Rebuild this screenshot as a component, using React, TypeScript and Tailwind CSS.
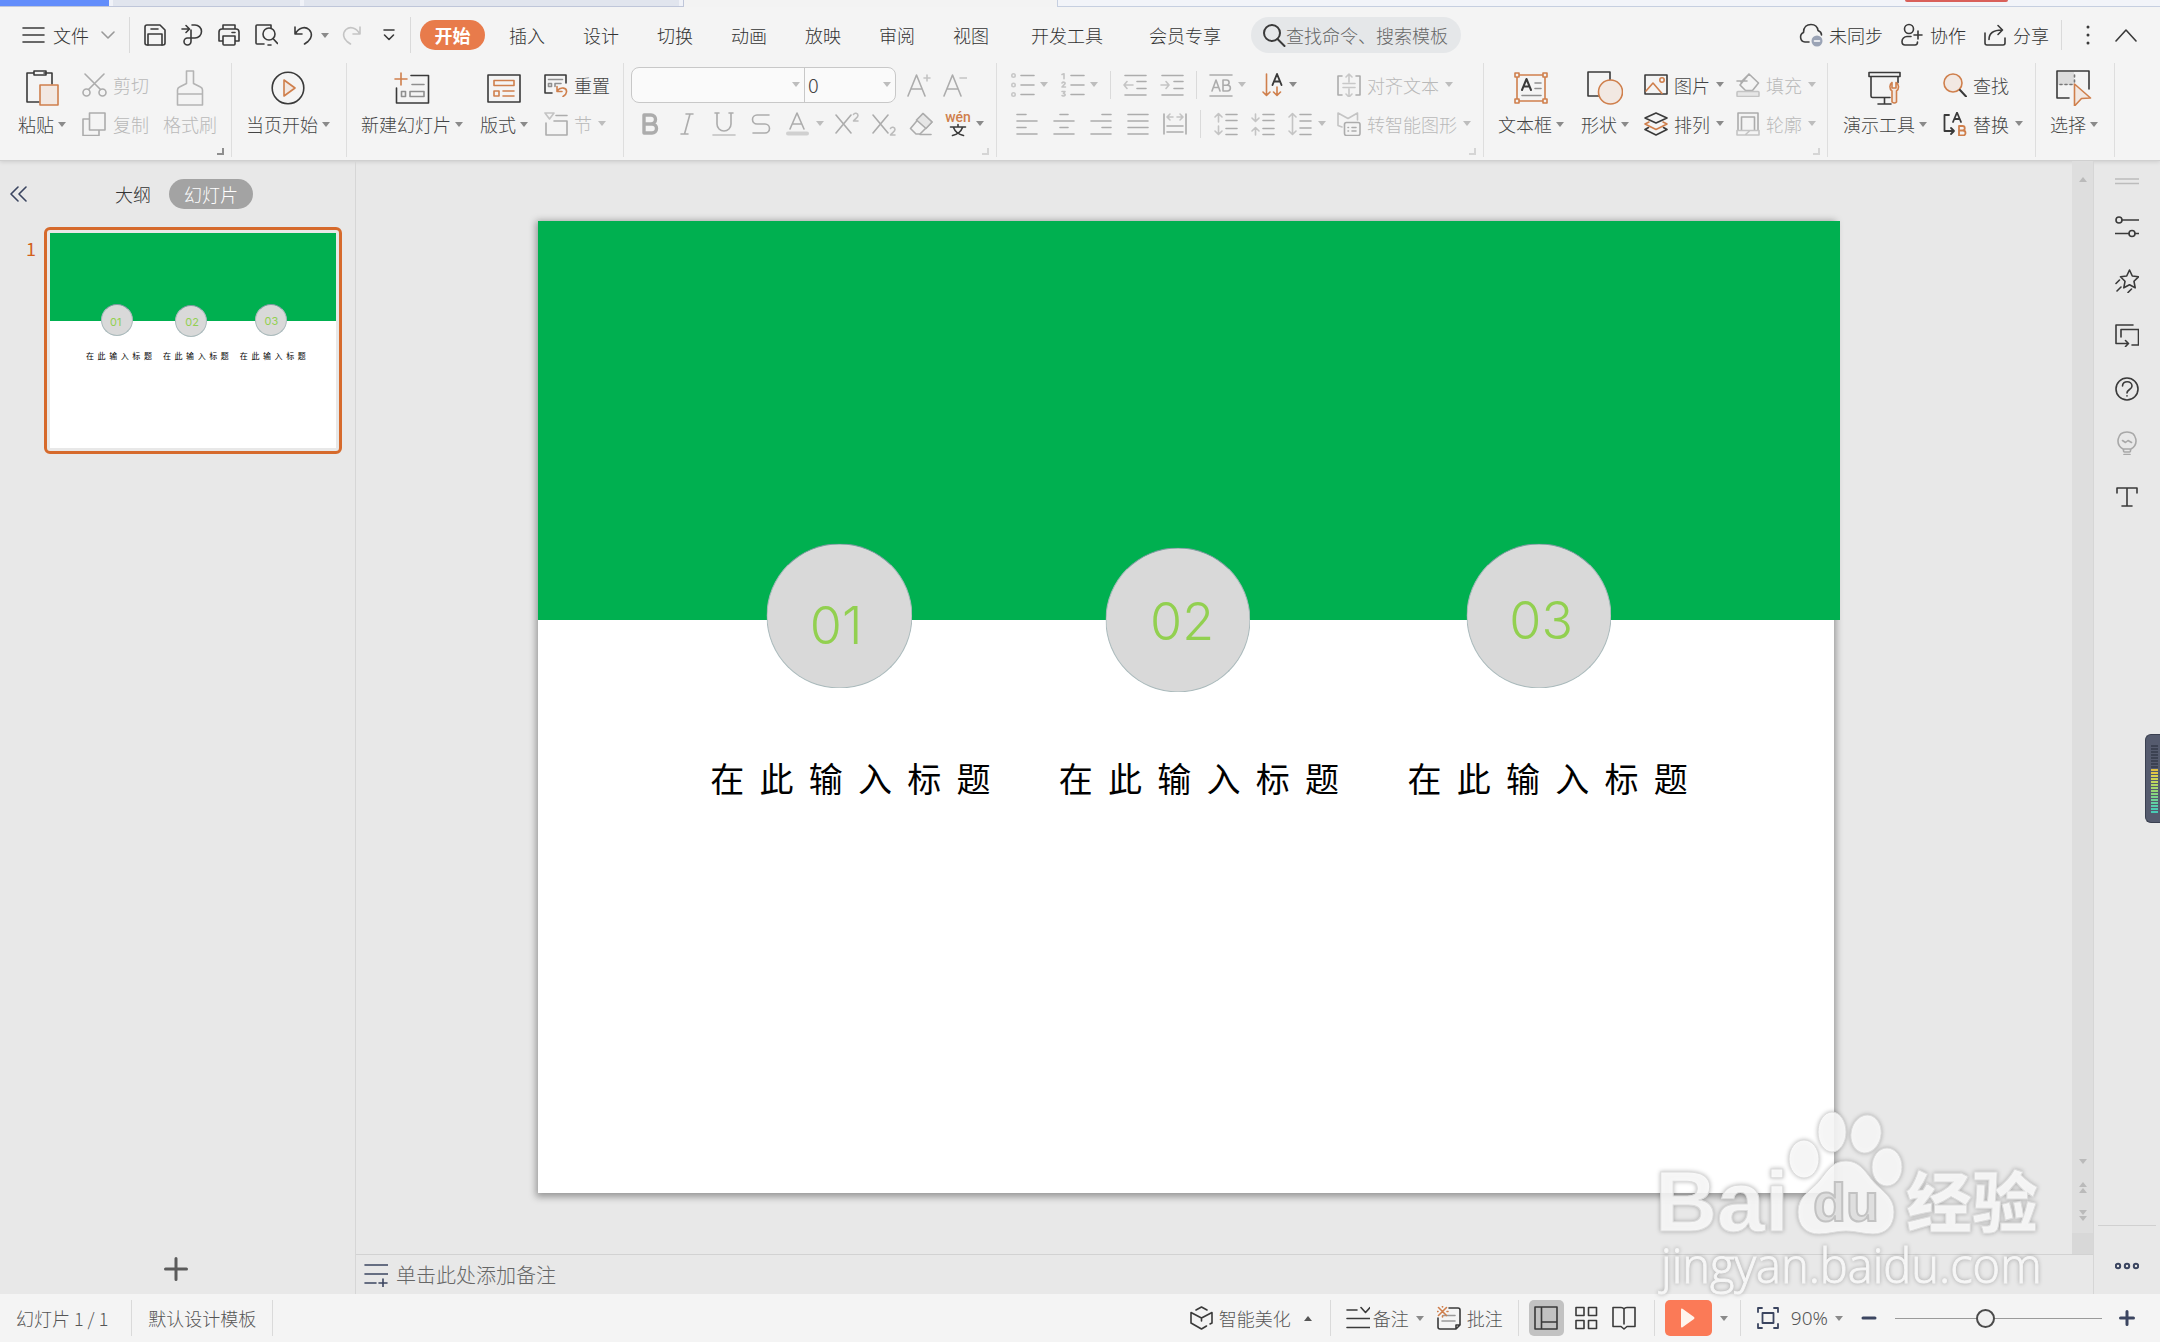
import type { ReactNode } from "react";
import clsx from "clsx";

const O = "#cf7f4c"; // accent stroke
const D = "#3a3a3a"; // dark stroke
const G = "#acacac"; // disabled stroke
const N = "#3b4560"; // navy stroke

type IcProps = { w?: number; h?: number; c?: string; sw?: number; children: ReactNode };

function Ic({ w = 24, h = 24, c = D, sw = 1.6, children }: IcProps) {
  return (
    <svg
      width={w}
      height={h}
      viewBox={`0 0 ${w} ${h}`}
      fill="none"
      stroke={c}
      strokeWidth={sw}
      strokeLinecap="round"
      strokeLinejoin="round"
      className="shrink-0"
      aria-hidden="true"
    >
      {children}
    </svg>
  );
}

function Caret({ c = "#8a8a8a", up = false }: { c?: string; up?: boolean }) {
  return (
    <svg width="8" height="5" viewBox="0 0 8 5" className="shrink-0" aria-hidden="true">
      <path d={up ? "M0 5h8L4 0z" : "M0 0h8L4 5z"} fill={c} />
    </svg>
  );
}

/* ---------- Ribbon building blocks ---------- */

type BtnProps = { icon: ReactNode; label: string; caret?: boolean; disabled?: boolean };

function BigButton({ icon, label, caret, disabled }: BtnProps) {
  return (
    <button disabled={disabled} className={clsx("mt-[5px] flex h-[72px] shrink-0 flex-col items-center", disabled ? "text-[#b9b9b9]" : "text-[#444]")}>
      <span className="flex h-9 items-center">{icon}</span>
      <span className="flex h-9 items-center gap-1 leading-none">
        {label}
        {caret && <Caret />}
      </span>
    </button>
  );
}

function SmallButton({ icon, label, caret, disabled }: BtnProps) {
  return (
    <button disabled={disabled} className={clsx("flex h-[39px] items-center gap-[6px] leading-none", disabled ? "text-[#b9b9b9]" : "text-[#444]")}>
      {icon}
      {label}
      {caret && <Caret c={disabled ? "#bdbdbd" : undefined} />}
    </button>
  );
}

function Cell({ label, children }: { label: string; children: ReactNode }) {
  return (
    <button aria-label={label} className="flex h-[39px] w-[37px] shrink-0 items-center justify-center">
      {children}
    </button>
  );
}

function DropCell({ label, dark, children }: { label: string; dark?: boolean; children: ReactNode }) {
  return (
    <button aria-label={label} className="flex h-[39px] shrink-0 items-center gap-[5px]">
      {children}
      <Caret c={dark ? "#8a8a8a" : "#bdbdbd"} />
    </button>
  );
}

function Group({ className, corner, cornerDark, children }: { className: string; corner?: boolean; cornerDark?: boolean; children: ReactNode }) {
  return (
    <div className={clsx("relative flex h-[94px] shrink-0 items-start border-r border-[#dedede] pt-[2px]", className)}>
      {children}
      {corner && (
        <span className={clsx("absolute right-[7px] bottom-[2px] h-[7px] w-[7px] border-r-2 border-b-2", cornerDark ? "border-[#8f8f8f]" : "border-[#d5d5d5]")} />
      )}
    </div>
  );
}

const Rule = ({ className }: { className: string }) => <span className={clsx("w-px shrink-0 bg-[#dadada]", className)} />;

/* ---------- Menu bar ---------- */

const TABS = ["插入", "设计", "切换", "动画", "放映", "审阅", "视图"];
const LONG_TABS = ["开发工具", "会员专享"];

function TopStrip() {
  return (
    <div className="flex h-[7px] bg-[#f3f3f3]">
      <div className="flex w-[684px] gap-1 border-r border-b border-[#bfc6d9] bg-[#f0f2f8]">
        <div className="w-[109px] bg-[#628dfb]" />
        <div className="w-[187px] bg-[#e1e5ee]" />
        <div className="w-[375px] bg-[#e1e5ee]" />
      </div>
      <div className="w-[373px]" />
      <div className="flex flex-1 justify-end border-b border-l border-[#c6cfe0] bg-[#f2f4f9] pr-[152px]">
        <div className="h-[2px] w-[103px] rounded-b bg-[#d9605a]" />
      </div>
    </div>
  );
}

function MenuBar() {
  return (
    <div className="flex h-14 items-center pr-[23px] pl-[22px] leading-none text-[#333]">
      <button className="flex items-center gap-2">
        <Ic w={23} h={18}>
          <path d="M1 2h21M1 9h21M1 16h21" />
        </Ic>
        文件
        <span className="ml-1">
          <Ic w={14} h={10} c="#999">
            <path d="M1 2l6 6 6-6" />
          </Ic>
        </span>
      </button>
      <Rule className="mr-[6px] ml-[14px] h-9" />
      <Cell label="保存">
        <Ic>
          <path d="M4 2h13l5 5v13a2 2 0 0 1-2 2H4a2 2 0 0 1-2-2V4a2 2 0 0 1 2-2z" />
          <path d="M5 22V11h14v11M8 6h7" />
        </Ic>
      </Cell>
      <Cell label="输出为PDF">
        <Ic>
          <path d="M2 6h7M6 2.500l3.500 3.500L6 9.500M12 2h3a6.500 6.500 0 0 1 0 13H7.500a3.500 3.500 0 1 0 3.500 3.500V7" />
        </Ic>
      </Cell>
      <Cell label="打印">
        <Ic>
          <path d="M6 6V2h12v4M5 18H2V9a3 3 0 0 1 3-3h14a3 3 0 0 1 3 3v9h-3M6 13h12v8a1 1 0 0 1-1 1H7a1 1 0 0 1-1-1zM15 9.500h3" />
        </Ic>
      </Cell>
      <Cell label="打印预览">
        <Ic>
          <path d="M10 21H3a1 1 0 0 1-1-1V3a1 1 0 0 1 1-1h14v3" />
          <circle cx="15" cy="11" r="6" />
          <path d="M14 22h3M19 15.500l4.500 5" />
        </Ic>
      </Cell>
      <Cell label="撤销">
        <Ic w={20} h={22}>
          <path d="M2 3v7h7M2.500 9.500C6 3.500 12 2 16 5.500c4 4 2.500 9-1 12L11.500 20" />
        </Ic>
      </Cell>
      <button aria-label="撤销列表">
        <Caret />
      </button>
      <span className="ml-1 flex">
        <Cell label="恢复">
          <Ic w={20} h={22} c="#c4c4c4">
            <path d="M18 3v7h-7M17.500 9.500C14 3.500 8 2 4 5.500c-4 4-2.500 9 1 12L8.500 20" />
          </Ic>
        </Cell>
        <Cell label="自定义快速访问">
          <Ic w={12} h={14}>
            <path d="M1 2h10M1.500 7L6 11.500 10.500 7" />
          </Ic>
        </Cell>
      </span>
      <Rule className="mr-[9px] ml-[3px] h-9" />
      <button className="h-[30px] w-[65px] shrink-0 rounded-full bg-[#e87b4b] font-bold text-white">开始</button>
      <nav className="ml-[5px] flex shrink-0">
        {TABS.map((t) => (
          <button key={t} className="px-[19px]">
            {t}
          </button>
        ))}
        {LONG_TABS.map((t) => (
          <button key={t} className="px-[23px]">
            {t}
          </button>
        ))}
      </nav>
      <label className="ml-[7px] flex h-9 w-[210px] shrink-0 items-center rounded-full bg-[#e5e7e9] pl-[11px]">
        <Ic sw={2}>
          <circle cx="10" cy="10" r="8" />
          <path d="M15.500 16l7 7" />
        </Ic>
        <input aria-label="查找命令" placeholder="查找命令、搜索模板" className="w-[168px] bg-transparent outline-none placeholder:text-[#666]" />
      </label>
      <div className="ml-auto flex shrink-0 items-center gap-[17px]">
        <button className="flex items-center gap-[6px]">
          <Ic>
            <path d="M10 19H6a5 5 0 0 1-1.500-9.500C4.500 4 8 1.500 12 1.500c4 0 6.500 2.500 7 6 2.500 1 3.500 2.500 3.500 4.500" />
            <circle cx="18" cy="18" r="5.500" fill="#9aa3b5" stroke="none" />
            <path d="M15.500 18h5" stroke="#fff" />
          </Ic>
          未同步
        </button>
        <button className="flex items-center gap-[6px]">
          <Ic>
            <circle cx="9" cy="6" r="4.500" />
            <path d="M11 13.500H7a5 5 0 0 0-5 5c0 2 1 3.500 3 3.500h10c1.500 0 2.500-1 2.500-3M14 12h8M18 8v8" />
          </Ic>
          协作
        </button>
        <button className="flex items-center gap-[6px]">
          <Ic>
            <path d="M2 10v10a2 2 0 0 0 2 2h16a2 2 0 0 0 2-2v-5" />
            <path d="M6 16.500c0-6 4-9.500 13-9.500M15 2.500L19.500 7 15 11.500" />
          </Ic>
          分享
        </button>
      </div>
      <Rule className="mr-[24px] ml-[12px] h-[30px]" />
      <button aria-label="更多">
        <Ic w={4} h={20}>
          <path d="M2 2v.1M2 10v.1M2 18v.1" strokeWidth="3" />
        </Ic>
      </button>
      <button aria-label="折叠功能区" className="ml-[25px]">
        <Ic w={22} h={14}>
          <path d="M1 13L11 2l10 11" />
        </Ic>
      </button>
    </div>
  );
}

/* ---------- Ribbon ---------- */

function FontGroup() {
  return (
    <Group className="pr-[12px] pl-[7px]" corner>
      <div>
        <div className="flex h-[39px] items-center">
          <div className="flex h-9 w-[265px] rounded-lg border border-[#c8c8c8] bg-[#fafafa]">
            <label className="flex w-[173px] items-center border-r border-[#c8c8c8] pr-[4px]">
              <input aria-label="字体" className="w-full min-w-0 bg-transparent px-2 outline-none" />
              <Caret c="#bdbdbd" />
            </label>
            <label className="flex flex-1 items-center pr-[4px]">
              <input aria-label="字号" defaultValue="0" className="w-full min-w-0 bg-transparent pl-[3px] text-[20px] text-[#444] outline-none" />
              <Caret c="#bdbdbd" />
            </label>
          </div>
          <button aria-label="增大字号" className="ml-[11px]">
            <Ic c={G}>
              <path d="M1 23L9.500 2 18 23M4.500 16h10" />
              <path d="M17 5h6M20 2v6" stroke="#c4c4c4" />
            </Ic>
          </button>
          <button aria-label="减小字号" className="ml-[12px]">
            <Ic c={G}>
              <path d="M1 23L9.500 2 18 23M4.500 16h10" />
              <path d="M17 5h7" stroke="#c4c4c4" />
            </Ic>
          </button>
        </div>
        <div className="flex items-center">
          <Cell label="加粗">
            <Ic w={20} c={G} sw={3.400}>
              <path d="M4 3h7a4.500 4.500 0 0 1 0 9H4zM4 12h8a4.500 4.500 0 0 1 0 9H4z" />
            </Ic>
          </Cell>
          <Cell label="倾斜">
            <Ic w={16} c={G}>
              <path d="M7 2h7M2 22h7M11 2L5.500 22" />
            </Ic>
          </Cell>
          <Cell label="下划线">
            <Ic c={G}>
              <path d="M3 1h4M17 1h4M5 1v11a7 7 0 0 0 14 0V1" />
              <path d="M1 23h22" stroke="#c0c0c0" />
            </Ic>
          </Cell>
          <Cell label="删除线">
            <Ic w={20} c={G}>
              <path d="M18 3H6a4.500 4.500 0 0 0 0 9h8a4.500 4.500 0 0 1 0 9H2" />
            </Ic>
          </Cell>
          <Cell label="字体颜色">
            <Ic c={G}>
              <path d="M4 17l7-16 7 16M6.500 12h9" />
              <path d="M2 21.500h19" stroke="#d0d0d0" strokeWidth="4" />
            </Ic>
          </Cell>
          <span className="flex w-[12px]">
            <Caret c="#bdbdbd" />
          </span>
          <Cell label="上标">
            <Ic c={G}>
              <path d="M1 3l15 18M16 3L1 21" />
              <path d="M18.500 2.500c1-2 4.500-1.500 4.500 1 0 2-2.500 3-4.500 5.500H23" stroke="#bcbcbc" />
            </Ic>
          </Cell>
          <Cell label="下标">
            <Ic c={G}>
              <path d="M1 3l15 18M16 3L1 21" />
              <path d="M18.500 16.500c1-2 4.500-1.500 4.500 1 0 2-2.500 3-4.500 5.500H23" stroke="#bcbcbc" />
            </Ic>
          </Cell>
          <Cell label="清除格式">
            <Ic c={G}>
              <path d="M14 1.500l9 8.500-12 12H7l-5.500-5.500z" />
              <path d="M14 1.500l9 8.500-6 6.500-9.500-8.500z" fill="#e6e6e6" />
              <path d="M11 22.500h11" />
            </Ic>
          </Cell>
          <Cell label="拼音指南">
            <Ic w={30} h={32}>
              <text x="15" y="14" textAnchor="middle" fontSize="14" fontFamily="Roboto, sans-serif" fontWeight="500" fill={O} stroke="none">
                wén
              </text>
              <path d="M7.500 19h15M15 16.500V19M10.500 19.500c1.500 4 5 7 10 8M19.500 19.500c-1.500 4-5 7-10 8" />
            </Ic>
          </Cell>
          <Caret />
        </div>
      </div>
    </Group>
  );
}

function ParagraphGroup() {
  return (
    <Group className="pr-[12px] pl-[11px]" corner>
      <div className="w-[329px]">
        <div className="flex items-center pl-[3px]">
          <DropCell label="项目符号">
            <Ic c={G}>
              <path d="M10 2.500h13M10 12h13M10 21.500h13" />
              <g stroke="#c8c8c8">
                <circle cx="2.500" cy="2.500" r="1.700" />
                <circle cx="2.500" cy="12" r="1.700" />
                <circle cx="2.500" cy="21.500" r="1.700" />
              </g>
            </Ic>
          </DropCell>
          <span className="ml-[13px]">
            <DropCell label="编号">
              <Ic c={G}>
                <path d="M10 2.500h13M10 12h13M10 21.500h13" />
                <path d="M1 1.500L3 .8v5M1 10c1-1.500 3.500-1 3 .8L1 14h3.500M1 18.500h3l-1.500 2c3 .5 1.500 3.500-1.500 2" stroke="#c4c4c4" />
              </Ic>
            </DropCell>
          </span>
          <Rule className="mx-[12px] h-7" />
          <button aria-label="减少缩进量">
            <Ic c={G}>
              <path d="M2 2.500h21M14 8.500h9M14 15.500h9M2 22h21" />
              <path d="M10 12H1M4 8.500L1 12l3 3.500" stroke="#c4c4c4" />
            </Ic>
          </button>
          <button aria-label="增加缩进量" className="ml-[13px]">
            <Ic c={G}>
              <path d="M2 2.500h21M14 8.500h9M14 15.500h9M2 22h21" />
              <path d="M1 12h8M6 8.500L9 12l-3 3.500" stroke="#c4c4c4" />
            </Ic>
          </button>
          <Rule className="mx-[12px] h-7" />
          <DropCell label="字符间距">
            <Ic c={G}>
              <path d="M1 2h22M1 23h22" />
              <path d="M3 18l4-11 4 11M4.500 14.500h5M14 7h3.500a2.600 2.600 0 0 1 0 5.200H14zM14 12.200h4.500a2.900 2.900 0 0 1 0 5.800H14z" />
            </Ic>
          </DropCell>
          <span className="ml-[16px]">
            <DropCell label="文字方向" dark>
              <Ic w={22} c={O}>
                <path d="M4.500 1v21M1 19l3.500 3.500L8 19M15 14v8M11.500 19l3.500 3.500 3.500-3.500" />
                <path d="M10.500 12L15 1l4.500 11M12 8.500h6" stroke={D} strokeWidth="1.900" />
              </Ic>
            </DropCell>
          </span>
        </div>
        <div className="flex items-center">
          <Cell label="左对齐">
            <Ic w={22} c={G}>
              <path d="M1 2.500h9M1 9h20M1 15.500h9M1 22h20" />
            </Ic>
          </Cell>
          <Cell label="居中">
            <Ic w={22} c={G}>
              <path d="M7 2.500h8M1 9h20M7 15.500h8M1 22h20" />
            </Ic>
          </Cell>
          <Cell label="右对齐">
            <Ic w={22} c={G}>
              <path d="M12 2.500h9M1 9h20M12 15.500h9M1 22h20" />
            </Ic>
          </Cell>
          <Cell label="两端对齐">
            <Ic w={22} c={G}>
              <path d="M1 2.500h20M1 9h20M1 15.500h20M1 22h20" />
            </Ic>
          </Cell>
          <Cell label="分散对齐">
            <Ic c={G}>
              <path d="M1 2v20M23 2v20M4 14h16M4 20h16" />
              <path d="M10 5H4.500M7 2L4 5l3 3M14 5h5.500M17 2l3 3-3 3" stroke="#c4c4c4" />
            </Ic>
          </Cell>
          <Rule className="mr-[6px] ml-[7px] h-7" />
          <Cell label="增大段落间距">
            <Ic c={G}>
              <path d="M12 2.500h11M12 8.500h11M12 16.500h11M12 22.500h11" />
              <path d="M4.500 10V2M1 5l3.500-3.500L8 5M4.500 14v8M1 19l3.500 3.500L8 19" stroke="#c4c4c4" />
            </Ic>
          </Cell>
          <Cell label="减小段落间距">
            <Ic c={G}>
              <path d="M12 2.500h11M12 8.500h11M12 16.500h11M12 22.500h11" />
              <path d="M4.500 2v7M1 6l3.500 3.500L8 6M4.500 23v-7M1 19l3.500-3.500L8 19" stroke="#c4c4c4" />
            </Ic>
          </Cell>
          <Cell label="行距">
            <Ic c={G}>
              <path d="M12 2.500h11M12 9h11M12 16h11M12 22.500h11" />
              <path d="M4.500 2v20M1 5l3.500-3.500L8 5M1 19l3.500 3.500L8 19" stroke="#c4c4c4" />
            </Ic>
          </Cell>
          <Caret c="#bdbdbd" />
        </div>
      </div>
      <div>
        <SmallButton
          label="对齐文本"
          caret
          disabled
          icon={
            <Ic c={G}>
              <path d="M5 3H1v19h4M19 3h4v19h-4" />
              <path d="M12 9V1M9 4l3-3 3 3M12 16v8M9 21l3 3 3-3M6 10.500h12M6 14.500h12" stroke="#c8c8c8" />
            </Ic>
          }
        />
        <SmallButton
          label="转智能图形"
          caret
          disabled
          icon={
            <Ic c={G}>
              <path d="M5 15l-4-1.500V1l10 5.500L20.500 1v7" stroke="#c4c4c4" />
              <rect x="7.500" y="10.500" width="15.500" height="13" rx="2" />
              <path d="M11 15.500h.5M15 15.500h4M11 19h.5M15 19h4" />
            </Ic>
          }
        />
      </div>
    </Group>
  );
}

function Ribbon() {
  return (
    <div className="flex h-[97px] items-start text-[#444]">
      <Group className="pr-[14px] pl-[18px]" corner cornerDark>
        <BigButton
          label="粘贴"
          caret
          icon={
            <Ic w={34} h={36}>
              <path d="M8 3H2v29h12M19 3h8v11M9 1h12v4H9z" />
              <path d="M15 15h18v20H15z" fill="#f2e8e2" stroke={O} />
            </Ic>
          }
        />
        <div className="mr-[14px] ml-[16px]">
          <SmallButton
            label="剪切"
            disabled
            icon={
              <Ic w={25} c={G}>
                <circle cx="4.500" cy="19.500" r="3.500" />
                <circle cx="20.500" cy="19.500" r="3.500" />
                <path d="M3 1l15.500 15.500M22 1L6.500 16.500" />
              </Ic>
            }
          />
          <SmallButton
            label="复制"
            disabled
            icon={
              <Ic w={25} c={G}>
                <path d="M7.500 1H23v17H7.500zM7.500 7H1v16.500h16V18" />
              </Ic>
            }
          />
        </div>
        <BigButton
          label="格式刷"
          disabled
          icon={
            <Ic w={28} h={36} c="#b4b4b4">
              <path d="M10.500 1h7v12.500l7 3.500c1.500.700 2 1.500 2 3v15H1.500V20c0-1.500.500-2.300 2-3l7-3.500zM1.500 24h25" />
            </Ic>
          }
        />
      </Group>
      <Group className="pr-[16px] pl-[14px]">
        <BigButton
          label="当页开始"
          caret
          icon={
            <Ic w={34} h={34}>
              <circle cx="17" cy="17" r="15.800" />
              <path d="M13 9l11 8-11 8z" fill="#f2e8e2" stroke={O} />
            </Ic>
          }
        />
      </Group>
      <Group className="pr-[13px] pl-[14px]">
        <BigButton
          label="新建幻灯片"
          caret
          icon={
            <Ic w={36} h={32}>
              <path d="M17 3.500h17.500V31H2.500V16" />
              <path d="M7 1v12M1 7h12" stroke={O} />
              <path d="M18 12.500h12M7.500 19.500h4v5h-4zM16 19.500h14v5H16z" stroke="#8f8f8f" />
            </Ic>
          }
        />
        <span className="w-[17px]" />
        <BigButton
          label="版式"
          caret
          icon={
            <Ic w={34} h={30}>
              <path d="M1 2h32v27H1z" />
              <path d="M7 7.500h20v5H7zM7 18h5v5H7zM16 18h11M16 23h11" stroke={O} />
            </Ic>
          }
        />
        <div className="ml-[16px]">
          <SmallButton
            label="重置"
            icon={
              <Ic>
                <path d="M8 20H1V2h21v8" />
                <path d="M4.500 6.500h14M4.500 10.500h3v3h-3zM11 10.500h6M11 10.500v3" stroke="#8f8f8f" />
                <path d="M13 13.500v5h5M13 18c4-5 10-3 9.500 1-.200 2-1.500 3.500-3.500 4.500" stroke={O} />
              </Ic>
            }
          />
          <SmallButton
            label="节"
            caret
            disabled
            icon={
              <Ic c={G}>
                <path d="M1 1h9L5.500 7z" stroke="#c4c4c4" />
                <path d="M12 3.500h11M10 9h13v14H2V11" />
              </Ic>
            }
          />
        </div>
      </Group>
      <FontGroup />
      <ParagraphGroup />
      <Group className="pr-[11px] pl-[14px]" corner>
        <BigButton
          label="文本框"
          caret
          icon={
            <Ic w={34} h={32} c={O}>
              <path d="M3 3h28v26H3z" />
              <g fill="#f3f3f3">
                <rect x="1" y="1" width="4" height="4" />
                <rect x="29" y="1" width="4" height="4" />
                <rect x="1" y="27" width="4" height="4" />
                <rect x="29" y="27" width="4" height="4" />
              </g>
              <path d="M8 18l4.500-11L17 18M9.500 14.500h6" stroke={D} strokeWidth="2" />
              <path d="M21 11h6M21 16.500h6M8 23.500h19" stroke="#8f8f8f" />
            </Ic>
          }
        />
        <span className="w-[17px]" />
        <BigButton
          label="形状"
          caret
          icon={
            <Ic w={36} h={34}>
              <path d="M1 1h22v24H1z" />
              <circle cx="23.500" cy="21" r="12" fill="#f2e8e2" stroke={O} />
            </Ic>
          }
        />
        <div className="ml-[15px]">
          <SmallButton
            label="图片"
            caret
            icon={
              <Ic>
                <path d="M1 2h22v19H1z" />
                <path d="M2 18l7-8 9 10.500" stroke={O} />
                <circle cx="18" cy="7" r="2.200" stroke={O} />
              </Ic>
            }
          />
          <SmallButton
            label="排列"
            caret
            icon={
              <Ic>
                <path d="M12 1l11 5-11 5L1 6zM1 17.500l3.500-2M23 17.500l-3.500-2M1 17.500l11 5.500 11-5.500" />
                <path d="M5 10l-4 2 11 5.500L23 12l-4-2" stroke={O} />
              </Ic>
            }
          />
        </div>
        <div className="ml-[12px]">
          <SmallButton
            label="填充"
            caret
            disabled
            icon={
              <Ic c={G}>
                <path d="M13 1l9.500 9-6 7.500h-7L4 12zM1 8h10M13 1L5 9" />
                <rect x="1" y="18.500" width="22" height="5" rx="1" fill="#e6e6e6" stroke="#c4c4c4" />
              </Ic>
            }
          />
          <SmallButton
            label="轮廓"
            caret
            disabled
            icon={
              <Ic c={G}>
                <path d="M2 18V1h20v17M5.500 18V5h13v13" />
                <path d="M1 18.500h22v4.500H1zM9 23l5-4.500" stroke="#c4c4c4" />
              </Ic>
            }
          />
        </div>
      </Group>
      <Group className="pr-[12px] pl-[15px]">
        <BigButton
          label="演示工具"
          caret
          icon={
            <Ic w={34} h={34}>
              <path d="M1 1.500h31v4H1zM3 5.500V25q0 1.500 1.500 1.500H22M30 5.500v6M16.500 27v6M10 33h13" />
              <path d="M24 31V20c-3-2-2.500-7 0-8.500V17h4v-5.500c3 1.500 3.500 6.500.500 8.500v11q-2 2-4.500 0z" fill="#f2e8e2" stroke={O} />
            </Ic>
          }
        />
        <div className="ml-[16px]">
          <SmallButton
            label="查找"
            icon={
              <Ic>
                <circle cx="10" cy="10" r="9" fill="#f2e8e2" stroke={O} />
                <path d="M17 17l6 6.500" strokeWidth="2" />
              </Ic>
            }
          />
          <SmallButton
            label="替换"
            caret
            icon={
              <Ic sw={1.800}>
                <path d="M6 3H1.500v16H11M8 16l3 3-3 3" />
                <path d="M10 10l4-9.500 4 9.500M11.500 7h5" />
                <path d="M16 14h3.500a2.200 2.200 0 0 1 0 4.500H16zM16 18.500h4a2.400 2.400 0 0 1 0 5H16z" stroke={O} />
              </Ic>
            }
          />
        </div>
      </Group>
      <Group className="pr-[16px] pl-[14px]">
        <BigButton
          label="选择"
          caret
          icon={
            <Ic w={36} h={36}>
              <path d="M2 2h16v13H2z" fill="#dcdcdc" stroke="none" />
              <path d="M13 28H1V1h32v18" />
              <path d="M18.500 5v8M4 14.500h13" stroke="#777" strokeDasharray="2 3" />
              <path d="M18.500 14l16 14-9 .5-7 7.500z" fill="#f2e8e2" stroke={O} />
            </Ic>
          }
        />
      </Group>
    </div>
  );
}

/* ---------- Slide ---------- */

// Positions are fractions of the slide, measured to each item's centre.
const BADGES = [
  { x: 0.2326, y: 0.406 },
  { x: 0.494, y: 0.41 },
  { x: 0.772, y: 0.406 },
];
const NUMBERS = [
  { no: "01", x: 0.23, y: 0.417 },
  { no: "02", x: 0.497, y: 0.413 },
  { no: "03", x: 0.774, y: 0.412 },
];
const TITLES = [0.241, 0.51, 0.779];

const pct = (n: number) => `${n * 100}%`;

function Slide({ thumb }: { thumb?: boolean }) {
  return (
    <div className={clsx("relative aspect-[4/3] w-full bg-white", !thumb && "shadow-[0_2px_7px_2px_rgba(0,0,0,0.35)]")}>
      <div className={clsx("absolute top-0 left-0 h-[41%] bg-[#00b050]", thumb ? "right-0" : "-right-[6px]")} />
      {BADGES.map((b) => (
        <div
          key={b.x}
          style={{ left: pct(b.x), top: pct(b.y) }}
          className="absolute aspect-square w-[11.2%] -translate-x-1/2 -translate-y-1/2 rounded-full border border-[#a9b9bb] border-t-[#7e9aa0] bg-[#d9d9d9]"
        />
      ))}
      {NUMBERS.map((n) => (
        <p
          key={n.no}
          style={{ left: pct(n.x), top: pct(n.y) }}
          className={clsx(
            "absolute -translate-x-1/2 -translate-y-1/2 font-['Inter',sans-serif] leading-none text-[#92d050]",
            thumb ? "text-[11px] font-normal" : "text-[52px] font-light"
          )}
        >
          {n.no}
        </p>
      ))}
      {TITLES.map((x) => (
        <p
          key={x}
          style={{ left: pct(x) }}
          className={clsx(
            "absolute top-[57.3%] -translate-x-1/2 -translate-y-1/2 font-['Noto_Sans_CJK_SC'] leading-none font-normal whitespace-pre text-black",
            thumb ? "text-[8px]" : "text-[34px]"
          )}
        >
          {"在  此  输  入  标  题"}
        </p>
      ))}
    </div>
  );
}

/* ---------- Panels ---------- */

function SlidePanel() {
  return (
    <aside className="flex w-[356px] shrink-0 flex-col border-r border-[#d6d6d6] leading-none">
      <div className="flex h-[66px] items-center pl-[10px] text-[#333]">
        <button aria-label="收起">
          <Ic w={17} h={16} c={N}>
            <path d="M8 1L1 8l7 7M16 1L9 8l7 7" />
          </Ic>
        </button>
        <button className="ml-[88px]">大纲</button>
        <button className="ml-[18px] h-[30px] w-[84px] rounded-full bg-[#a3a3a3] text-white">幻灯片</button>
      </div>
      <div className="flex pr-[13px]">
        <span className="w-[44px] shrink-0 pt-[12px] pl-[26px] font-['Noto_Sans_CJK_SC'] font-normal text-[#d2601a]">1</span>
        <div className="flex-1 rounded-md border-[3px] border-[#d66a2c] p-[3px]">
          <Slide thumb />
        </div>
      </div>
      <button aria-label="新建幻灯片" className="mt-auto mb-[13px] ml-[164px] w-6">
        <Ic c="#5b5b5b" sw={3}>
          <path d="M12 1.500v21M1.500 12h21" />
        </Ic>
      </button>
    </aside>
  );
}

function ScrollBar() {
  return (
    <div className="flex w-[21px] shrink-0 flex-col items-center bg-[#dedede] pt-[16px]">
      <Caret up c="#bababa" />
      <div className="mt-auto flex flex-col items-center pb-[12px]">
        <Caret c="#bababa" />
        <span className="mt-[18px] flex flex-col gap-px">
          <Caret up c="#bababa" />
          <Caret up c="#bababa" />
        </span>
        <span className="mt-[17px] flex flex-col gap-px">
          <Caret c="#bababa" />
          <Caret c="#bababa" />
        </span>
      </div>
      <div className="h-[21px] w-full bg-[#d8d8d8]" />
    </div>
  );
}

function SideTool({ label, children }: { label: string; children: ReactNode }) {
  return (
    <button aria-label={label} className="flex h-[54px] items-center justify-center">
      {children}
    </button>
  );
}

function SideBar() {
  return (
    <aside className="flex w-[67px] shrink-0 flex-col border-l border-[#d6d6d6]">
      <div className="flex h-[39px] items-center justify-center">
        <Ic h={8} c="#bcbcbc">
          <path d="M0 2h24M0 6.500h24" />
        </Ic>
      </div>
      <SideTool label="属性">
        <Ic>
          <circle cx="4" cy="5" r="3" />
          <circle cx="17" cy="18.500" r="3" />
          <path d="M7 5h17M0 18.500h14M20 18.500h4" />
        </Ic>
      </SideTool>
      <SideTool label="动画">
        <Ic>
          <path d="M14.500 1l2.800 6 6.200.8-4.500 4.500 1.200 6.500-5.700-3-5.700 3 1.200-6.500L5.500 7.800l6.200-.8zM1 14.500l3.500-3.500M2 22l4-4M13 23.500l3.500-3.500" />
        </Ic>
      </SideTool>
      <SideTool label="切换">
        <Ic>
          <path d="M18 2H1v18.500h12M10.500 17.500l3 3-3 3M6 14V6.500h17.500V22H17" />
        </Ic>
      </SideTool>
      <SideTool label="帮助">
        <Ic>
          <circle cx="12" cy="12" r="11" />
          <path d="M7.500 9c0-6 9.500-5.500 9.500 0 0 3.500-5 3.500-5 7M12 18.800v.2" />
        </Ic>
      </SideTool>
      <SideTool label="灵感">
        <Ic c="#a8a8a8">
          <path d="M8 18C0 13.500 2 1 12 1s12 12.500 4 17zM8.500 18v2q0 1 1 1h5q1 0 1-1v-2M9 23.500h6M7.500 9.500l3 2 2.500-2 3.500 2" />
        </Ic>
      </SideTool>
      <SideTool label="文字">
        <Ic>
          <path d="M2 8V3h20v5M12 3v18M7 21h10" />
        </Ic>
      </SideTool>
      <div className="mx-1 mt-auto border-t border-[#d0d0d0]" />
      <button aria-label="更多" className="flex h-[68px] items-center justify-center pt-[12px]">
        <Ic h={8} c={N} sw={2}>
          <circle cx="3" cy="4" r="2.200" />
          <circle cx="12" cy="4" r="2.200" />
          <circle cx="21" cy="4" r="2.200" />
        </Ic>
      </button>
    </aside>
  );
}

const METER = [
  "#3c4252", "#3c4252", "#3c4252", "#3c4252", "#3c4252", "#3c4252", "#3c4252", "#3c4252",
  "#e0bf42", "#e3c644", "#dcd04e", "#d0d354", "#c0d65c", "#b0d764", "#a3d76c", "#96d774",
  "#88d77e", "#7ad58a", "#6ed397", "#62d1a2", "#56cfac", "#4eccb2", "#48cab4",
];

function Meter() {
  return (
    <div className="absolute top-[734px] right-0 flex h-[89px] w-[15px] flex-col justify-center gap-px rounded-l-md border border-r-0 border-[#3a4050] bg-[#555b6e] pl-[5px]">
      {METER.map((c, i) => (
        <span key={i} style={{ backgroundColor: c }} className="h-[2px] w-[7px]" />
      ))}
    </div>
  );
}

function Watermark() {
  return (
    <svg
      width="400"
      height="200"
      viewBox="0 0 400 200"
      className="pointer-events-none absolute right-[110px] bottom-[42px] drop-shadow-[0_0_2px_rgba(0,0,0,0.3)]"
      fill="#fff"
      fillOpacity="0.85"
      stroke="#dcdcdc"
      strokeWidth="1"
    >
      <text x="5" y="131" fontSize="86" fontWeight="700" fontFamily="Liberation Sans, sans-serif">Bai</text>
      <ellipse cx="154" cy="59" rx="15" ry="19" />
      <ellipse cx="182" cy="32" rx="14" ry="20" />
      <ellipse cx="216" cy="34" rx="15" ry="19" transform="rotate(10 216 34)" />
      <ellipse cx="237" cy="67" rx="15" ry="19" />
      <path d="M196 61c13 0 19 10 26 19 9 11 22 16 22 32 0 14-8 22-21 22-10 0-17-3-27-3s-17 3-27 3c-13 0-21-8-21-22 0-16 13-21 22-32 7-9 13-19 26-19z" />
      <text x="163" y="121" fontSize="54" fontWeight="700" fontFamily="Liberation Sans, sans-serif" fill="#dadada" stroke="#c2c2c2" strokeWidth="2">du</text>
      <text x="256" y="127" fontSize="66" fontWeight="900" fontFamily="Noto Sans CJK SC, sans-serif">经验</text>
      <text x="11" y="183" fontSize="47" fontFamily="Open Sans, sans-serif" stroke="#f4f4f4">jingyan.baidu.com</text>
    </svg>
  );
}

/* ---------- Status bar ---------- */

function StatusBar() {
  return (
    <footer className="flex h-12 items-center bg-[#f4f4f4] pr-[25px] pl-4 leading-none text-[#555]">
      <span>幻灯片 1 / 1</span>
      <Rule className="mr-4 ml-[23px] h-9" />
      <span>默认设计模板</span>
      <Rule className="ml-4 h-9" />
      <div className="ml-auto flex items-center">
        <button className="flex items-center gap-[6px]">
          <Ic w={23}>
            <path d="M6 4l5.500-3L17 4M11.500 12L1 6.500V17l10.500 6 5-3M11.500 12L22 6.500V17l-2 1M11.500 12v3" />
          </Ic>
          智能美化
          <span className="ml-[7px]">
            <Caret up c="#555" />
          </span>
        </button>
        <Rule className="mr-[15px] ml-[18px] h-9" />
        <button className="flex items-center gap-[3px]">
          <Ic>
            <path d="M1 4h10M15 1.500l4.500 5 4.500-5M1 12.500h23M1 21.500h23" />
          </Ic>
          备注
          <span className="ml-1">
            <Caret />
          </span>
        </button>
        <button className="ml-[13px] flex items-center gap-[6px]">
          <Ic>
            <path d="M12 2h9a2 2 0 0 1 2 2v15l-4 4H3a2 2 0 0 1-2-2V12M23 19h-4v4" />
            <path d="M6 9.500h12M5 15h13" stroke="#999" />
            <path d="M1.500 1.500l8 8M9.500 1.500l-8 8M5.500 0v1M5.500 10v1M0 5.500h1M10 5.500h1" stroke={O} />
          </Ic>
          批注
        </button>
        <Rule className="mr-[10px] ml-[15px] h-9" />
        <button aria-label="普通视图" className="flex h-9 w-[35px] items-center justify-center rounded-[5px] bg-[#c2c2c2]">
          <Ic>
            <path d="M1 1h22v22H1zM7.500 1v22M7.500 16H23" />
          </Ic>
        </button>
        <button aria-label="幻灯片浏览" className="ml-[10px]">
          <Ic>
            <path d="M2 1.500h8v8H2zM14.500 1.500h8v8h-8zM2 14.500h8v8H2zM14.500 14.500h8v8h-8z" />
          </Ic>
        </button>
        <button aria-label="阅读视图" className="ml-[14px]">
          <Ic>
            <path d="M12 3q-1-1.500-3-1.500H1v19h8l3 2.500 3-2.500h8v-19h-8Q13 1.500 12 3zM12 3v15" />
          </Ic>
        </button>
        <Rule className="mr-[10px] ml-[18px] h-9" />
        <button aria-label="放映" className="flex h-9 w-[47px] items-center justify-center rounded-[5px] bg-[#fb7a57]">
          <svg width="14" height="20" viewBox="0 0 14 20" aria-hidden="true">
            <path d="M0 1.500Q0 0 1.500.8L13 9q1 1 0 2L1.500 19.200Q0 20 0 18.500z" fill="#fff5ee" />
          </svg>
        </button>
        <button aria-label="放映选项" className="ml-2">
          <Caret />
        </button>
        <Rule className="mr-4 ml-3 h-9" />
        <button aria-label="最佳显示比例">
          <Ic w={22} c={N} sw={1.800}>
            <path d="M1 6V2h4M17 2h4v4M1 18v4h4M17 22h4v-4M5.500 7h11v10h-11z" />
          </Ic>
        </button>
        <button className="ml-[12px] flex items-center gap-[7px] font-['Noto_Sans'] text-[19px]">
          90%
          <Caret />
        </button>
        <button aria-label="缩小" className="ml-[18px]">
          <Ic w={16} h={16} c={N} sw={3}>
            <path d="M2 8h12" />
          </Ic>
        </button>
        <input
          type="range"
          aria-label="缩放"
          min={0}
          max={100}
          defaultValue={43}
          className="ml-[18px] h-5 w-[207px] appearance-none bg-transparent [&::-webkit-slider-runnable-track]:h-px [&::-webkit-slider-runnable-track]:bg-[#9a9a9a] [&::-webkit-slider-thumb]:-mt-[9px] [&::-webkit-slider-thumb]:h-[19px] [&::-webkit-slider-thumb]:w-[19px] [&::-webkit-slider-thumb]:appearance-none [&::-webkit-slider-thumb]:rounded-full [&::-webkit-slider-thumb]:border-2 [&::-webkit-slider-thumb]:border-[#4a4a4a] [&::-webkit-slider-thumb]:bg-[#f0f0f0]"
        />
        <button aria-label="放大" className="ml-[17px]">
          <Ic w={16} h={16} c={N} sw={3}>
            <path d="M8 1.500v13M1.500 8h13" />
          </Ic>
        </button>
      </div>
    </footer>
  );
}

export default function App() {
  return (
    <div className="relative flex min-h-screen flex-col overflow-hidden bg-[#e8e8e8] font-['Noto_Sans_CJK_SC',sans-serif] text-[18px] font-light">
      <header className="border-b border-[#d0d0d0] bg-[#f4f4f4] shadow-[0_1px_4px_rgba(0,0,0,0.12)]">
        <TopStrip />
        <MenuBar />
        <Ribbon />
      </header>
      <div className="flex flex-1">
        <SlidePanel />
        <div className="flex min-w-0 flex-1 flex-col">
          <div className="flex flex-1">
            <main className="min-w-0 flex-1 pt-[60px] pr-[238px] pl-[182px]">
              <Slide />
            </main>
            <ScrollBar />
          </div>
          <label className="flex h-10 items-center gap-2 border-t border-[#d2d2d2] pl-2 text-[20px]">
            <Ic c={N}>
              <path d="M1 2h23M1 11h23M1 20h11M15 20h8M19 16v8" />
            </Ic>
            <input aria-label="备注" placeholder="单击此处添加备注" className="flex-1 bg-transparent outline-none placeholder:text-[#666]" />
          </label>
        </div>
        <SideBar />
      </div>
      <StatusBar />
      <Meter />
      <Watermark />
    </div>
  );
}
